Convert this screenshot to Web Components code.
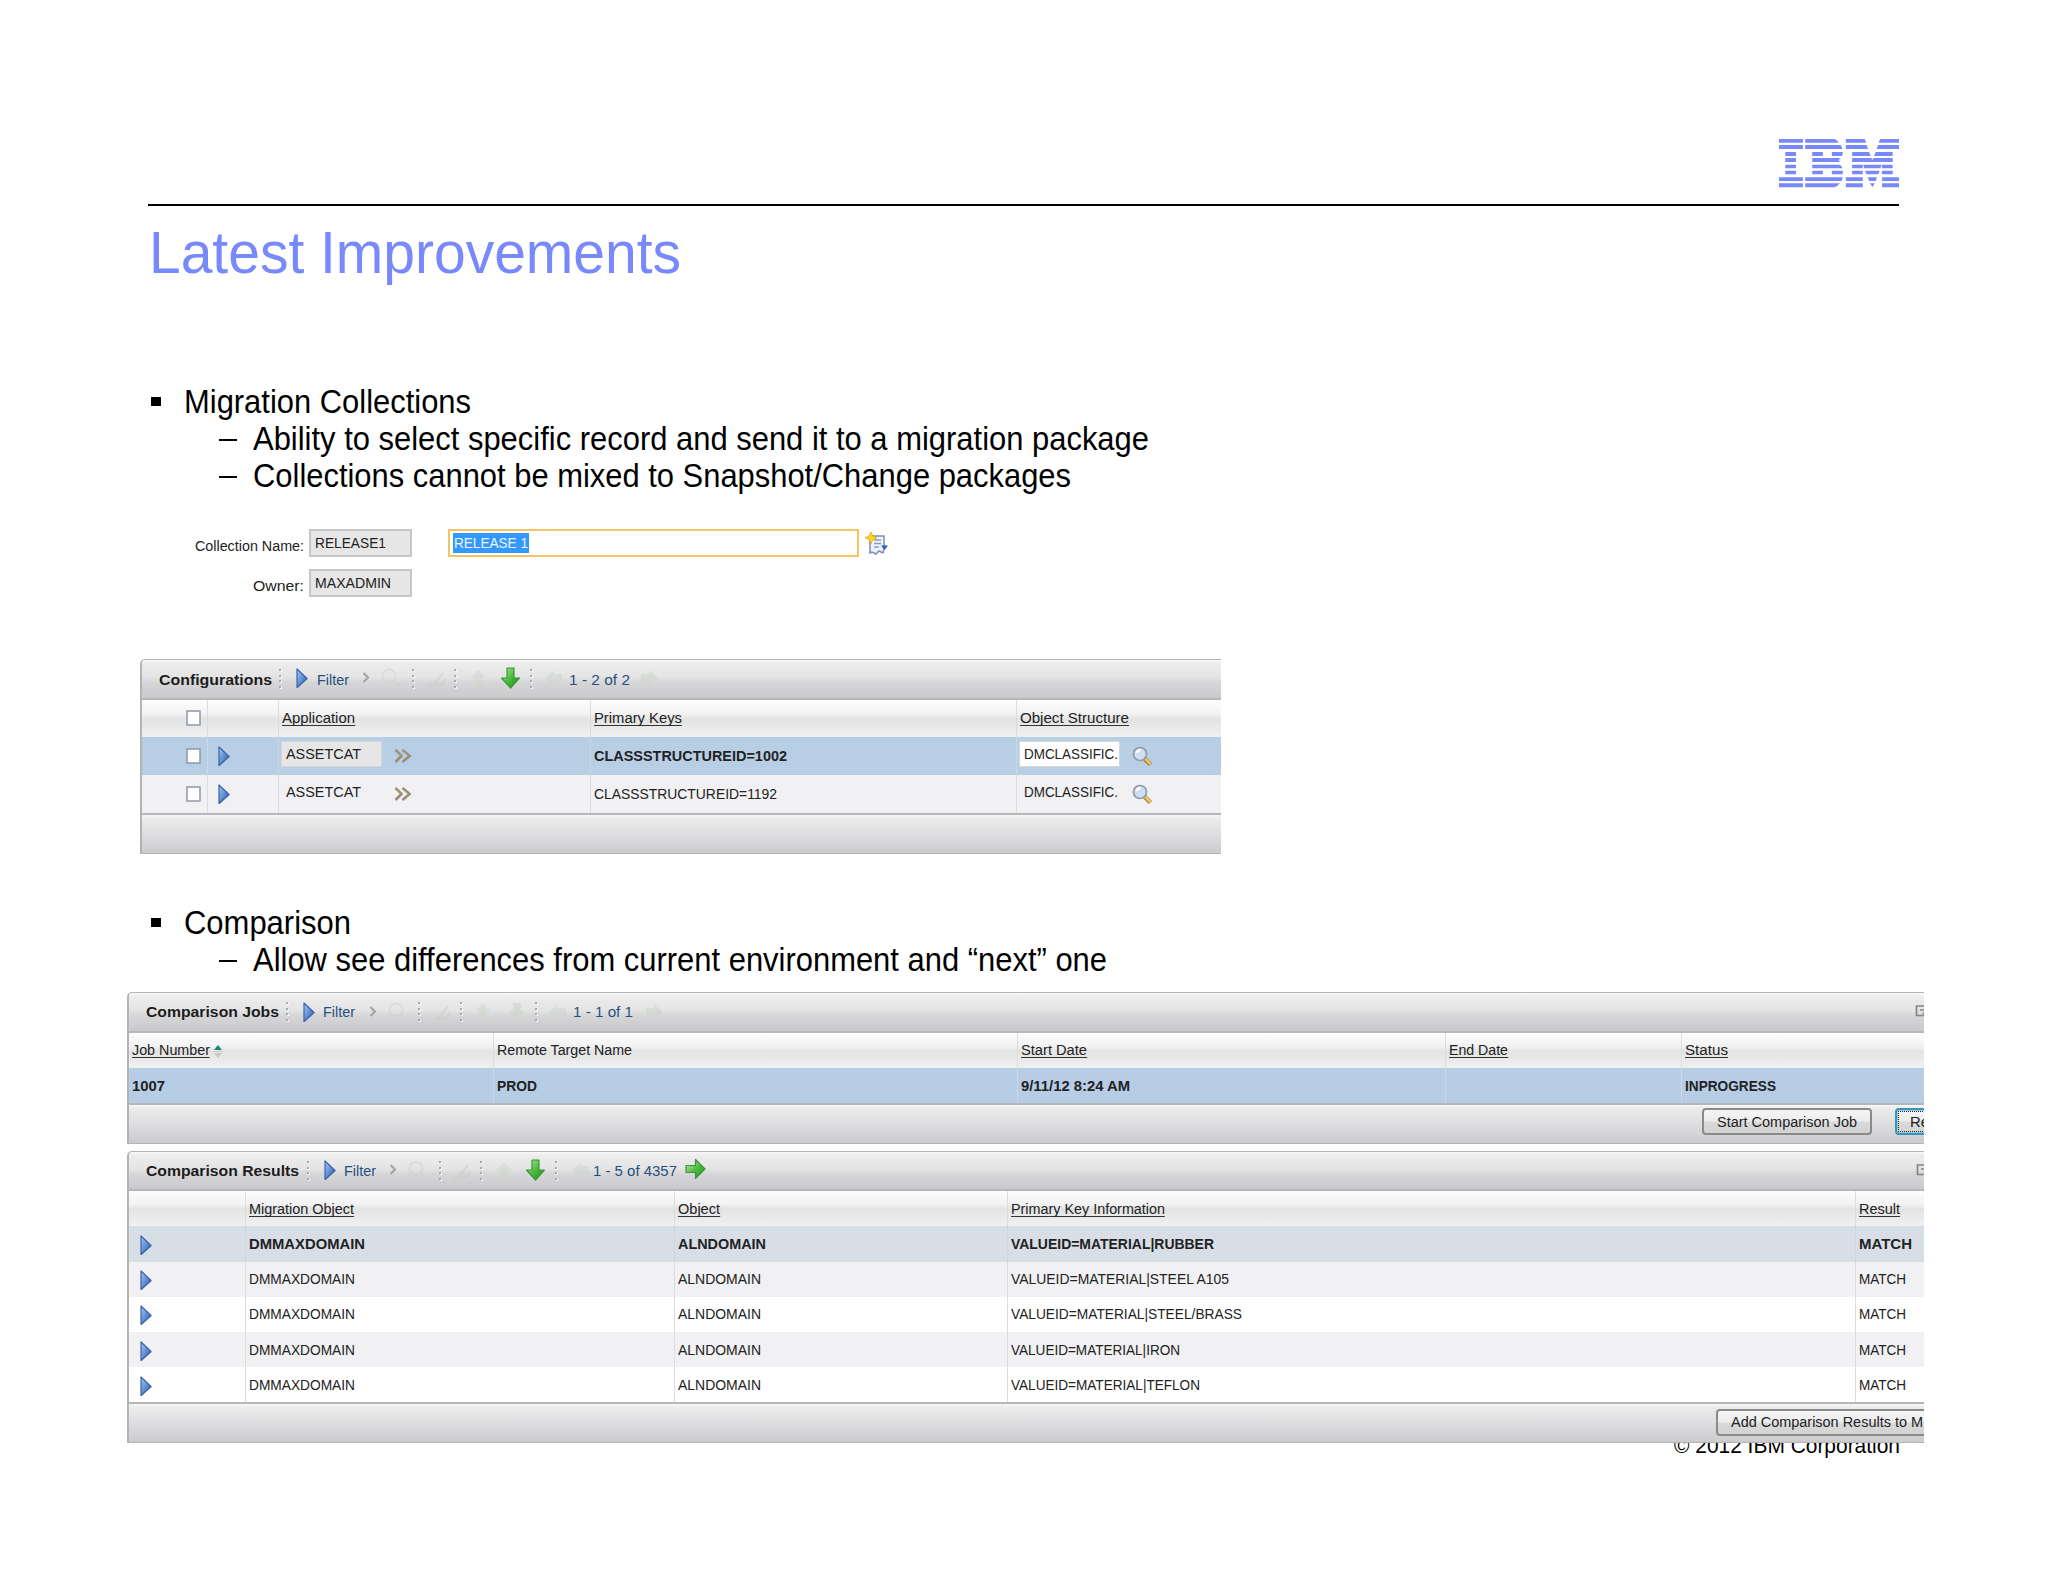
<!DOCTYPE html>
<html lang="en">
<head>
<meta charset="utf-8">
<title>Latest Improvements</title>
<style>
  body {
    margin: 0;
    background: #fff;
    font-family: "Liberation Sans", Arial, sans-serif;
  }
</style>
</head>
<body>
<slide-page></slide-page>

<script>
// Text set to an exact width
class FitText extends HTMLElement {
  constructor() {
    super();
    this.attachShadow({mode: 'open'});
    this.shadowRoot.innerHTML = `
    <style>
      :host { display: block; flex: none; white-space: nowrap; }
      span { display: inline-block; transform-origin: 0 50%; vertical-align: top; }
      :host([underline]) span { border-bottom: 1.5px solid #333; line-height: 15px; margin-top: 1px; }
    </style>
    <span><slot></slot></span>`;
  }

  connectedCallback() {
    const width = parseFloat(this.getAttribute('w'));
    const span = this.shadowRoot.querySelector('span');
    const natural = span.getBoundingClientRect().width;
    this.style.width = `${width}px`;
    if (natural) {
      span.style.transform = `scaleX(${width / natural})`;
    }
  }
}

class IbmLogo extends HTMLElement {
  constructor() {
    super();
    this.attachShadow({mode: 'open'});
    this.shadowRoot.innerHTML = `
    <style>
      :host { display: block; width: 120px; height: 49px; }
      svg { display: block; fill: #7889fb; }
    </style>
    <svg width="120" height="49" viewBox="117 57 361 147" preserveAspectRatio="none">
      <path d="M117 57h72v11h-72z M117 75h72v12h-72z M136 96h32v12h-32z M136 114h32v12h-32z M136 134h32v11h-32z M136 152h32v11h-32z M117 172h72v11h-72z M117 190h72v12h-72z"/>
      <path d="M196 57h88q9 4 13 11h-101z M196 75h106q4 5 6 12h-112z M217 96h32v12h-32z M276 96h33q0 7-3 12h-30z M217 114h86l-7 6 5 6h-84z M217 134h84q5 5 7 11h-91z M217 152h32v11h-32z M276 152h33v11h-33z M196 172h113q-1 6-4 11h-109z M196 190h104q-6 9-17 12h-87z"/>
      <path d="M318 57h57l4 11h-61z M421 57h57v11h-61z M318 75h63l4 12h-67z M415 75h63v12h-67z M337 96h51l5 12h-56z M408 96h51v12h-56z M337 114h58l3 6 3-6h58v12h-122z M337 134h32v11h-32z M370 134h56l-4 11h-48z M427 134h32v11h-32z M337 152h32v11h-32z M376 152h44l-4 11h-36z M427 152h32v11h-32z M318 172h51v11h-51z M384 172h28l-4 11h-20z M427 172h51v11h-51z M318 190h51v12h-51z M391 190h14l-7 12z M427 190h51v12h-51z"/>
    </svg>`;
  }
}

const icons = {
  dots: [3, 20, `<g fill="#fff" opacity=".8"><rect x="1" y="1" width="2" height="2"/><rect x="1" y="7" width="2" height="2"/><rect x="1" y="12" width="2" height="2"/><rect x="1" y="18" width="2" height="2"/></g><g fill="#aaa"><rect width="2" height="2"/><rect y="6" width="2" height="2"/><rect y="11" width="2" height="2"/><rect y="17" width="2" height="2"/></g>`],
  triangle: [13, 21, `<defs><linearGradient id="g" x2="1" y2="1"><stop offset="0" stop-color="#a9c8f1"/><stop offset=".55" stop-color="#5a8bd0"/><stop offset="1" stop-color="#2c539b"/></linearGradient></defs><path d="M2 2v18l10-9z" fill="#777" opacity=".35"/><path d="M1 1v18.5l10-9z" fill="url(#g)" stroke="#3a62ad" stroke-width="1.2" stroke-linejoin="round"/>`],
  chevron: [8, 11, `<path d="M1.500 0l4.500 4.500-4.500 4.500" fill="none" stroke="#a2a2a2" stroke-width="2"/>`],
  down: [21, 22, `<defs><linearGradient id="g" x2="1" y2="1"><stop offset="0" stop-color="#b4eaa0"/><stop offset=".5" stop-color="#4cbb3b"/><stop offset="1" stop-color="#128a18"/></linearGradient></defs><path d="M7 0h7v10h5.500l-9 10-9-10h5.500z" fill="url(#g)" stroke="#3c953a" stroke-width="1.200" stroke-linejoin="round"/>`],
  right: [21, 21, `<defs><linearGradient id="g" x2="1" y2="1"><stop offset="0" stop-color="#c2edaa"/><stop offset=".5" stop-color="#54bd45"/><stop offset="1" stop-color="#188f1d"/></linearGradient></defs><path d="M1 5.500v7h9.500v6l9.500-9.500-9.500-9.500v6z" fill="url(#g)" stroke="#3c953a" stroke-width="1.200" stroke-linejoin="round"/>`],
  fadedSearch: [20, 19, `<g fill="none" stroke="#cbcccb" stroke-width="1.600" opacity=".45"><circle cx="8" cy="7" r="6.500"/><path d="M13 12l5 5"/></g>`],
  fadedPen: [20, 20, `<path d="M2 17l5-1 9-12M7 16l9 0 2-6" fill="none" stroke="#c6c8c6" stroke-width="2.500" opacity=".4"/>`],
  fadedUp: [19, 20, `<path d="M9 1l8 8h-4v8h-8v-8h-4z" fill="#cbd5c9" opacity=".5"/>`],
  fadedDown: [19, 20, `<path d="M5 1h8v8h4l-8 8-8-8h4z" fill="#c6d2c4" opacity=".5"/>`],
  fadedLeft: [20, 19, `<path d="M1 9l9-8v4h8v8h-8v4z" fill="#c9d1c8" opacity=".4"/>`],
  fadedRight: [20, 19, `<path d="M19 9l-9-8v4h-8v8h8v4z" fill="#c9d3c7" opacity=".5"/>`],
  download: [12, 12, `<path d="M10 0H1.500v9.500h8.500M5 4h6M8 8l4-3.500" fill="none" stroke="#858585" stroke-width="1.700"/>`],
  detail: [18, 15, `<path d="M1.500 1l6 6-6 6M8.500 1l7 6-7 6" fill="none" stroke="#988e76" stroke-width="2.600"/><path d="M2 2.500l4.500 4.500M9 2.500l5 4.500" stroke="#c4bba2" stroke-width=".8"/>`],
  search: [21, 21, `<path d="M12.500 12.500l6 6" stroke="#a77f35" stroke-width="4.500"/><path d="M13 12.500l5.500 5.500" stroke="#efc85c" stroke-width="2.500"/><circle cx="8" cy="8" r="6.500" fill="#cbe0f2" stroke="#939aa3" stroke-width="1.700"/><path d="M4.500 7q1-3 4-3" fill="none" stroke="#fff" stroke-width="1.800"/>`],
  sort: [10, 13, `<path d="M5 0l4 5h-8z" fill="#1d8577"/><path d="M0 6.500h10" stroke="#c4d3cd"/><path d="M5 13l-4-5h8z" fill="#cfc9c0"/>`],
  longText: [24, 24, `<path d="M5 4h14v13l-1 4-4-2-3 3-4-2-2 1z" fill="#eef2fa" stroke="#7a8fb8" stroke-width="1.500"/><path d="M9 8h7M9 11.500h7M9 15h5" stroke="#8c9cb8" stroke-width="1.300"/><path d="M16 13.500h7l-3.500 4.500z" fill="#2c5bb8"/><path d="M6 0l1.800 4 4.200 1.800-4.200 1.800-1.800 4.200-1.800-4.200-4.200-1.800 4.200-1.800z" fill="#ffd51f" stroke="#e5a71b" stroke-width=".8"/>`],
  checkbox: [15, 16, `<rect x="1" y="1" width="13" height="14" fill="#fff" stroke="#8d98a8" stroke-width="1.500"/>`]
};

class UiIcon extends HTMLElement {
  constructor() {
    super();
    this.attachShadow({mode: 'open'});
  }

  connectedCallback() {
    const [width, height, shapes] = icons[this.getAttribute('name')];
    this.shadowRoot.innerHTML = `
    <style>
      :host { display: block; flex: none; width: ${width}px; height: ${height}px; }
      svg { display: block; overflow: visible; }
    </style>
    <svg width="${width}" height="${height}" viewBox="0 0 ${width} ${height}">${shapes}</svg>`;
  }
}

class BulletLine extends HTMLElement {
  constructor() {
    super();
    this.attachShadow({mode: 'open'});
    this.shadowRoot.innerHTML = `
    <style>
      :host {
        display: flex;
        align-items: center;
        height: 37.3px;
        padding-left: 151px;
        font-size: 33px;
        line-height: 37px;
        color: #000;
      }
      i { width: 10px; height: 9px; margin-right: 23px; background: #000; }
      :host([sub]) { padding-left: 219px; }
      :host([sub]) i { width: 18px; height: 2px; margin: 3px 16px 0 0; }
    </style>
    <i></i><slot></slot>`;
  }
}

class FormField extends HTMLElement {
  constructor() {
    super();
    this.attachShadow({mode: 'open'});
    this.shadowRoot.innerHTML = `
    <style>
      :host { display: flex; height: 28px; font-size: 15.5px; color: #222; }
      .label { display: flex; justify-content: flex-end; width: 304px; padding: 8px 5px 0 0; line-height: 18px; }
      .box {
        box-sizing: border-box;
        width: 103px;
        height: 28px;
        padding: 3px 0 0 4px;
        line-height: 18px;
        background: #e6e6e7;
        border: 2px solid #c6c6c8;
      }
    </style>
    <div class="label"><slot name="label"></slot></div>
    <div class="box"><slot></slot></div>
    <slot name="after"></slot>`;
  }
}

class LongInput extends HTMLElement {
  constructor() {
    super();
    this.attachShadow({mode: 'open'});
    this.shadowRoot.innerHTML = `
    <style>
      :host {
        display: flex;
        align-items: center;
        box-sizing: border-box;
        width: 411px;
        height: 28px;
        margin: 0 6px 0 35.5px;
        padding-left: 3px;
        border: 2px solid #f3c463;
        background: #fff;
      }
      div { height: 20px; line-height: 19px; padding: 0 1px; background: #3399ff; color: #eef6ff; }
    </style>
    <div><slot></slot></div>`;
  }
}

class PushButton extends HTMLElement {
  constructor() {
    super();
    this.attachShadow({mode: 'open'});
    this.shadowRoot.innerHTML = `
    <style>
      :host {
        display: flex;
        flex: none;
        align-items: center;
        box-sizing: border-box;
        height: 27px;
        padding: 0 13px;
        border: 2px solid #8a8a8b;
        border-radius: 4px;
        background: linear-gradient(#f5f5f5, #ececec 48%, #dadadb 52%, #d2d2d3);
        color: #222;
      }
      :host([focused]) { border-color: #3a94b8; outline: 1px dotted #222; outline-offset: -4px; box-shadow: inset 0 0 0 1px #8ed2e8; }
    </style>
    <slot></slot>`;
  }
}

// Panel with a tool bar, a column header, rows and a button bar.
// Its data comes from the "panels" object, by name.
class DataPanel extends HTMLElement {
  constructor() {
    super();
    this.attachShadow({mode: 'open'});
  }

  connectedCallback() {
    const panel = panels[this.getAttribute('name')];
    const columns = panel.columns.map(c => `${c}px`).join(' ');
    this.shadowRoot.innerHTML = `
    <style>
      :host {
        display: block;
        position: relative;
        z-index: 1;
        box-sizing: border-box;
        overflow: hidden;
        border: solid #b4b4b6;
        border-width: 1px 0 1px 2px;
        border-top-left-radius: 5px;
        font-size: 15.5px;
        line-height: 18px;
        color: #222;
        background: #fff;
      }
      .toolbar {
        display: flex;
        align-items: center;
        box-sizing: border-box;
        height: ${panel.toolbarHeight}px;
        border-bottom: 2px solid #b6b6b8;
        background: linear-gradient(#fafafa, #ededee 8%, #e4e4e5 45%, #d6d6d8 60%, #cacacc);
        color: #27507f;
      }
      .toolbar > * { flex: none; }
      .toolbar > fit-text { padding-top: ${panel.textDrop || 0}px; }
      .title { font-weight: bold; color: #1c1c1c; }
      .row { display: grid; grid-template-columns: ${columns}; height: ${panel.rowHeight}px; background: #fff; }
      .row:nth-child(odd) { background: #f1f0f2; }
      .head { height: ${panel.headHeight}px; background: linear-gradient(#fdfdfd, #f2f2f3 38%, #e3e3e4 52%, #f0f1f1) !important; }
      .selected { background: ${panel.selected} !important; }
      .cell { display: flex; align-items: center; min-width: 0; box-sizing: border-box; padding-left: 3px; }
      .cell + .cell { border-left: 1px solid #dcdcdd; }
      .selected .cell + .cell { border-color: ${panel.divider}; }
      .bold { font-weight: bold; }
      .value { display: flex; align-items: center; box-sizing: border-box; width: 101px; height: 26px; padding-left: 5px; margin: -3px 12px 0 -1px; }
      .selected .value { background: #e6e6e7; border: 1px solid #d4d6d8; padding-left: 4px; }
      .selected .edit { background: #fff; }
      .footer {
        display: flex;
        align-items: flex-start;
        box-sizing: border-box;
        height: ${panel.footerHeight}px;
        padding-top: ${panel.footerPad || 0}px;
        border-top: 2px solid #b6b6b8;
        background: linear-gradient(#f8f8f8, #ececed 8%, #dedee0 50%, #cbcbcd);
      }
    </style>
    <div class="toolbar">${panel.toolbar.map(item => this.tool(item)).join('')}</div>
    <div>
      <div class="row head">${panel.head.map(cell => `<div class="cell">${cell}</div>`).join('')}</div>
      ${panel.rows.map((row, i) => `<div class="row ${i ? '' : 'selected'}">${row.map(cell => `<div class="cell">${cell}</div>`).join('')}</div>`).join('')}
    </div>
    <div class="footer">${panel.footer || ''}</div>`;
  }

  // [left gap, icon name] or [left gap, text, text width, class]
  tool([gap, content, width, cls]) {
    if (width) {
      return `<fit-text class="${cls || ''}" w="${width}" style="margin-left:${gap}px">${content}</fit-text>`;
    }
    return `<ui-icon name="${content}" style="margin-left:${gap}px"></ui-icon>`;
  }
}

const text = (content, w) => `<fit-text w="${w}">${content}</fit-text>`;
const bold = (content, w) => `<fit-text class="bold" w="${w}">${content}</fit-text>`;
const link = (content, w) => `<fit-text underline w="${w}">${content}</fit-text>`;
const icon = (name, left, top = 0) => `<ui-icon name="${name}" style="margin:${top}px 0 0 ${left}px"></ui-icon>`;

const configRow = (key) => [
  icon('checkbox', 41),
  icon('triangle', 7, 1),
  `<div class="value">${text('ASSETCAT', 75)}</div>${icon('detail', 0, 2)}`,
  key,
  `<div class="value edit">${text('DMCLASSIFIC.', 94)}</div>${icon('search', 0, 2)}`
];

const resultRow = (value, width, first) => {
  const style = first ? bold : text;
  return [
    icon('triangle', 7.5, 3),
    style('DMMAXDOMAIN', first ? 116 : 106),
    style('ALNDOMAIN', first ? 88 : 83),
    style(value, width),
    style('MATCH', first ? 53 : 47)
  ];
};

const panels = {
  configurations: {
    toolbarHeight: 40, headHeight: 37, rowHeight: 38, footerHeight: 40, textDrop: 2,
    columns: [65, 71, 312, 426, 205],
    selected: '#b7cee5', divider: '#cad8e6',
    toolbar: [
      [17, 'Configurations', 113, 'title'], [7, 'dots'], [14, 'triangle'], [7.5, 'Filter', 32],
      [13, 'chevron'], [11, 'fadedSearch'], [11, 'dots'], [12, 'fadedPen'], [7, 'dots'],
      [12, 'fadedUp'], [12, 'down'], [9, 'dots'], [11, 'fadedLeft'], [5, '1 - 2 of 2', 61], [9, 'fadedRight']
    ],
    head: [icon('checkbox', 41), '', link('Application', 73), link('Primary Keys', 88), link('Object Structure', 109)],
    rows: [
      configRow(bold('CLASSSTRUCTUREID=1002', 193)),
      configRow(text('CLASSSTRUCTUREID=1192', 183))
    ]
  },
  jobs: {
    toolbarHeight: 39.5, headHeight: 35, rowHeight: 35.5, footerHeight: 39.5, footerPad: 3,
    columns: [364, 524, 427.5, 236, 244.5],
    selected: '#b7cde6', divider: '#cbd8e7',
    toolbar: [
      [17, 'Comparison Jobs', 133, 'title'], [7, 'dots'], [14, 'triangle'], [7, 'Filter', 32],
      [14, 'chevron'], [11, 'fadedSearch'], [10, 'dots'], [11, 'fadedPen'], [8, 'dots'],
      [11, 'fadedUp'], [15, 'fadedDown'], [8, 'dots'], [10, 'fadedLeft'], [5, '1 - 1 of 1', 60],
      [11, 'fadedRight'], [1251, 'download']
    ],
    head: [
      link('Job Number', 78) + icon('sort', 3, 3), text('Remote Target Name', 135),
      link('Start Date', 66), link('End Date', 59), link('Status', 43)
    ],
    rows: [[bold('1007', 33), bold('PROD', 40), bold('9/11/12 8:24 AM', 109), '', bold('INPROGRESS', 91)]],
    footer: `
      <push-button style="margin-left:1573px">${text('Start Comparison Job', 140)}</push-button>
      <push-button focused style="margin-left:23px">${text('Re', 19)}</push-button>`
  },
  results: {
    toolbarHeight: 39.5, headHeight: 35, rowHeight: 35.2, footerHeight: 39.5, footerPad: 4.5,
    columns: [116, 429, 333, 848, 70],
    selected: '#d7dee6', divider: '#cfd8e0',
    toolbar: [
      [17, 'Comparison Results', 153, 'title'], [8, 'dots'], [14, 'triangle'], [7, 'Filter', 32],
      [13, 'chevron'], [11, 'fadedSearch'], [11, 'dots'], [10, 'fadedPen'], [8, 'dots'],
      [12, 'fadedUp'], [11, 'down'], [9, 'dots'], [13, 'fadedLeft'], [2, '1 - 5 of 4357', 84],
      [7.5, 'right'], [1210, 'download']
    ],
    head: ['', link('Migration Object', 105), link('Object', 42), link('Primary Key Information', 154), link('Result', 41)],
    rows: [
      resultRow('VALUEID=MATERIAL|RUBBER', 203, true),
      resultRow('VALUEID=MATERIAL|STEEL A105', 218),
      resultRow('VALUEID=MATERIAL|STEEL/BRASS', 231),
      resultRow('VALUEID=MATERIAL|IRON', 169),
      resultRow('VALUEID=MATERIAL|TEFLON', 189)
    ],
    footer: `<push-button style="margin-left:1587px">${text('Add Comparison Results to M', 192)}</push-button>`
  }
};

class SlidePage extends HTMLElement {
  constructor() {
    super();
    this.attachShadow({mode: 'open'});
    this.shadowRoot.innerHTML = `
    <style>
      :host { display: flex; flex-direction: column; width: 2048px; height: 1582px; overflow: hidden; }
      header { display: flex; justify-content: flex-end; height: 65px; margin: 139px 149px 0 148px; border-bottom: 2px solid #000; }
      h1 { margin: 17px 0 0 149px; font-size: 59.5px; font-weight: normal; line-height: 60px; color: #7889fb; }
      .collections { margin-top: 99.500px; }
      .form { display: flex; flex-direction: column; gap: 12px; margin-top: 34.500px; }
      .configurations { width: 1081px; margin: 62px 0 0 140px; }
      .comparison { margin-top: 50px; }
      .wide { width: 1797px; margin-left: 127px; }
      .jobs { margin-top: 14px; }
      .results { margin-top: 7px; }
      footer { display: flex; margin: -9px 0 0 1674px; font-size: 21.3px; line-height: 24px; color: #000; }
    </style>
    <header><ibm-logo></ibm-logo></header>
    <h1><fit-text w="532">Latest Improvements</fit-text></h1>
    <section class="collections">
      <bullet-line><fit-text w="287">Migration Collections</fit-text></bullet-line>
      <bullet-line sub><fit-text w="896">Ability to select specific record and send it to a migration package</fit-text></bullet-line>
      <bullet-line sub><fit-text w="818">Collections cannot be mixed to Snapshot/Change packages</fit-text></bullet-line>
    </section>
    <section class="form">
      <form-field>
        <fit-text slot="label" w="109">Collection Name:</fit-text>
        <fit-text w="71">RELEASE1</fit-text>
        <long-input slot="after"><fit-text w="74">RELEASE 1</fit-text></long-input>
        <ui-icon slot="after" name="longText" style="margin-top:3px"></ui-icon>
      </form-field>
      <form-field>
        <fit-text slot="label" w="51">Owner:</fit-text>
        <fit-text w="76">MAXADMIN</fit-text>
      </form-field>
    </section>
    <data-panel class="configurations" name="configurations"></data-panel>
    <section class="comparison">
      <bullet-line><fit-text w="167">Comparison</fit-text></bullet-line>
      <bullet-line sub><fit-text w="854">Allow see differences from current environment and “next” one</fit-text></bullet-line>
    </section>
    <data-panel class="wide jobs" name="jobs"></data-panel>
    <data-panel class="wide results" name="results"></data-panel>
    <footer><fit-text w="226">© 2012 IBM Corporation</fit-text></footer>`;
  }
}

customElements.define('fit-text', FitText);
customElements.define('ibm-logo', IbmLogo);
customElements.define('ui-icon', UiIcon);
customElements.define('bullet-line', BulletLine);
customElements.define('form-field', FormField);
customElements.define('long-input', LongInput);
customElements.define('push-button', PushButton);
customElements.define('data-panel', DataPanel);
customElements.define('slide-page', SlidePage);
</script>
</body>
</html>
